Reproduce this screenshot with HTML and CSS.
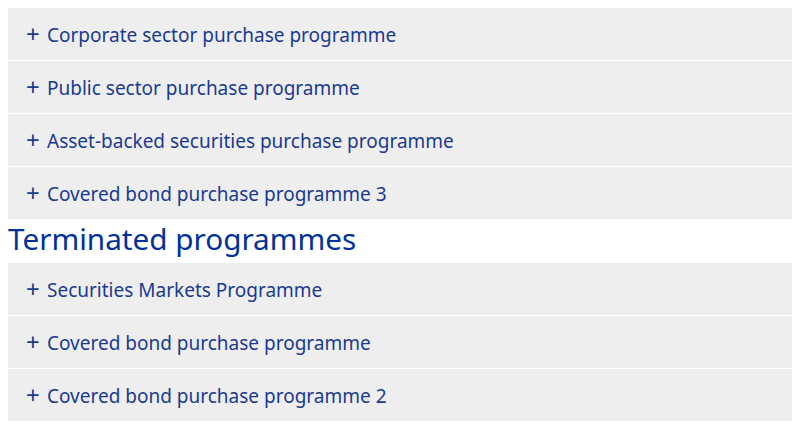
FILE: index.html
```html
<!DOCTYPE html>
<html lang="en">
<head>
    <meta charset="UTF-8">
    <meta name="viewport" content="width=device-width, initial-scale=1.0">
    <title>Asset purchase programmes</title>
    <link rel="stylesheet" href="styles.css">
</head>
<body>
    <div class="programmes">
        <div class="accordion">
            <div class="accordion-item"><span class="plus">+</span>Corporate sector purchase programme</div>
            <div class="accordion-item"><span class="plus">+</span>Public sector purchase programme</div>
            <div class="accordion-item"><span class="plus">+</span>Asset-backed securities purchase programme</div>
            <div class="accordion-item"><span class="plus">+</span>Covered bond purchase programme 3</div>
        </div>
        <h2 class="section-title">Terminated programmes</h2>
        <div class="accordion">
            <div class="accordion-item"><span class="plus">+</span>Securities Markets Programme</div>
            <div class="accordion-item"><span class="plus">+</span>Covered bond purchase programme</div>
            <div class="accordion-item"><span class="plus">+</span>Covered bond purchase programme 2</div>
        </div>
    </div>
</body>
</html>
```

FILE: styles.css
```css
body {
    font-family: "Noto Sans", "Open Sans", sans-serif;
    margin: 8px;
    background-color: #fff;
    color: #003299;
}
.accordion {
    display: flex;
    flex-direction: column;
    gap: 1px;
}
.accordion-item {
    display: flex;
    align-items: center;
    height: 52px;
    padding-left: 18px;
    padding-top: 2px;
    box-sizing: border-box;
    background-color: #eeeeee;
    font-size: 19px;
    color: #1a3a92;
}
.plus {
    width: 21px;
    font-size: 24px;
    line-height: 1;
    margin-top: -3px;
}
.section-title {
    margin: 0;
    height: 44px;
    padding-bottom: 6px;
    box-sizing: border-box;
    display: flex;
    align-items: center;
    font-size: 29.7px;
    font-weight: normal;
    color: #003299;
}
```
